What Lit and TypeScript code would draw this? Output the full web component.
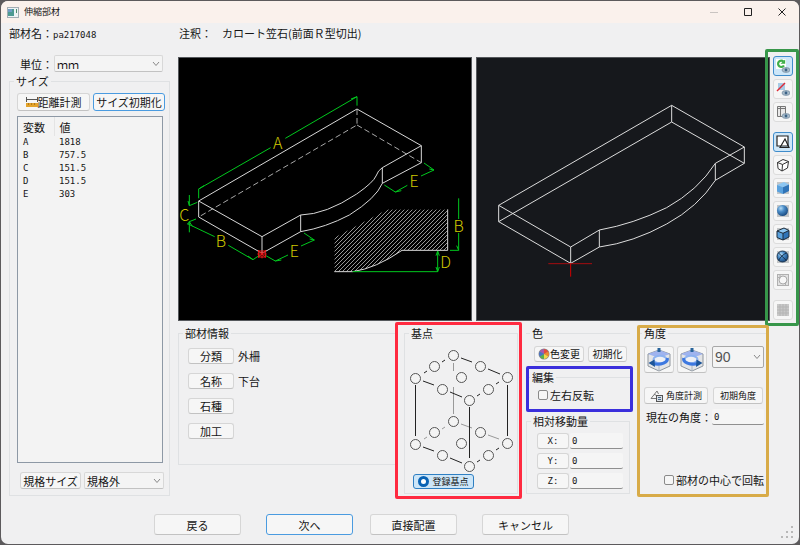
import { LitElement, html, css, svg } from "lit";
import { customElement, state } from "lit/decorators.js";
import { classMap } from "lit/directives/class-map.js";

const shared = css`
  * { box-sizing: border-box; }
  button, select, input { font: inherit; color: inherit; margin: 0; }
  button {
    display: inline-flex; align-items: center; justify-content: center;
    padding: 0; background: #f6f6f6; border: 1px solid #d6d6d6;
    border-bottom-color: #c2c2c2; border-radius: 3px; white-space: nowrap;
    line-height: 12px;
  }
  svg { display: block; }
`;

const eye = svg`<ellipse cx="10" cy="11" rx="4" ry="2.4" fill="#a9bccb" stroke="#7891a5" stroke-width=".8"/><circle cx="10" cy="11" r="1.4" fill="#3c6387"/>`;
const shade = svg`<rect x="1" y="1" width="12" height="12" fill="#c3c6c8"/>`;
const cubeBlue = svg`<path d="M1 4L8 1l5 2.5-6 2.8z" fill="#8cc6f2"/><path d="M1 4l6 2.3V13L1 10.5z" fill="#5aa2de"/><path d="M7 6.3l6-2.8V10l-6 3z" fill="#2f74b8"/>`;
const ball = svg`${shade}<circle cx="6.5" cy="6.5" r="5.5" fill="url(#ballfill)"/>`;
const defs = svg`<defs><radialGradient id="ballfill" cx=".35" cy=".3" r=".7"><stop offset="0" stop-color="#b5dcf6"/><stop offset=".45" stop-color="#4a8cc7"/><stop offset="1" stop-color="#1d4f86"/></radialGradient></defs>`;

const tools = [
  { name: "更新", on: true, gap: false, art: svg`<rect x="0" y="0" width="10" height="10" fill="#fff"/><path d="M7.5 2.5A3.2 3.2 0 1 0 8 6.5" fill="none" stroke="#3fae49" stroke-width="2.2"/><path d="M4.5 4.8h4.700V.4z" fill="#3fae49"/>${eye}` },
  { name: "非表示", on: false, gap: false, art: svg`<rect x="2" y="1" width="7" height="7" fill="#a8cbe6"/>${eye}<path d="M1 9L9 1" stroke="#e02a36" stroke-width="1.5"/>` },
  { name: "図面", on: false, gap: false, art: svg`<path d="M1.5 1.5h8v10h-8zM4.500 1.500v10M1.500 3.500h8" fill="#e9e9e9" stroke="#777" stroke-width="1"/>${eye}` },
  { name: "ワイヤー", on: true, gap: true, art: svg`<path d="M1 1h11v10H1z" fill="#fff" stroke="#222" stroke-width="1.2"/><path d="M4 12.5L9 4l4 8.500z" fill="none" stroke="#222" stroke-width="1.200"/>` },
  { name: "隠線", on: false, gap: false, art: svg`<path d="M1.500 4.500L7 1.500l5.500 2-1 6.500L6 13l-4-2.500zM1.500 4.500L6.500 6.500l6-3M6.500 6.500L6 13" fill="#fff" stroke="#333" stroke-width="1"/>` },
  { name: "面", on: false, gap: false, art: svg`${shade}${cubeBlue}` },
  { name: "滑らか", on: false, gap: false, art: ball },
  { name: "面と線", on: false, gap: false, art: svg`${shade}${cubeBlue}<path d="M1 4L8 1l5 2.500V10l-6 3-6-2.500zM1 4l6 2.300 6-2.800M7 6.300V13" fill="none" stroke="#1d2b3a" stroke-width="1"/>` },
  { name: "滑らかと線", on: false, gap: false, art: svg`${ball}<path d="M2.500 3l8 7.500M10.500 3c-3 1-6 4-8 7.500" fill="none" stroke="#172d45" stroke-width=".9"/><circle cx="6.500" cy="6.500" r="5.500" fill="none" stroke="#172d45" stroke-width=".9"/>` },
  { name: "透過", on: false, gap: false, art: svg`<rect x="1.500" y="1.500" width="11" height="11" fill="#e2e2e2" stroke="#b0b0b0"/><circle cx="7" cy="7" r="4" fill="#f7f7f7" stroke="#aaa"/><path d="M1.500 4.500h3M4 1.500v4M9.500 12.500V9" stroke="#b0b0b0"/>` },
  { name: "グリッド", on: false, gap: true, art: svg`<rect x="1" y="1" width="12" height="12" fill="#c8c8c8"/><path d="M4 1v12M7 1v12M10 1v12M1 4h12M1 7h12M1 10h12" stroke="#b4b4b4" stroke-width="1"/>` },
];

const hatch = Array.from({ length: 48 }, (_, i) => {
  const x = 470 + i * 12;
  return `M${x} 463L${x - 190} 653`;
}).join("");

/* Dimensioned sketch of the part, with its side profile. */
@customElement("part-sketch")
class PartSketch extends LitElement {
  static styles = css`
    :host { display: block; background: #000; border: 1px solid #55585c; }
    svg { display: block; width: 100%; height: auto; }
    .w { fill: none; stroke: #d8d8d8; stroke-width: 3; }
    .d { fill: none; stroke: #a8a8a8; stroke-width: 3; stroke-dasharray: 17 9; }
    .g { fill: none; stroke: #00c81e; stroke-width: 3; }
    .h { fill: none; stroke: #989898; stroke-width: 3; }
    .r { fill: none; stroke: #f01818; stroke-width: 3; }
    text { fill: #cfc800; font: 300 48px "Noto Sans CJK JP", sans-serif; text-anchor: middle; }
  `;
  render() {
    return html`<svg viewBox="9 9 876 786" role="img" aria-label="寸法図">
      <defs><clipPath id="side"><path d="M475 548L635 463H815V586H678Q600 640 530 650H475z"/></clipPath></defs>
      <path class="d" d="M543 163V210L68 486M543 210L736 323"/>
      <path class="w" d="M68 438L543 162L736 272V323L619 385V338L736 272M68 438V486L258 595L374 530V480L258 545L68 438M258 545V595"/>
      <path class="w" d="M374 480Q450 478 542 417Q592 382 600 363Q606 346 619 338M374 530Q450 517 520 480Q600 430 619 385"/>
      <path class="g" d="M68 430V402L284 278M328 250L543 125V152M68 402L84 392M543 125L525 132"/>
      <path class="g" d="M40 420V452L64 442M40 452l-4-14M40 532V500L60 492M34 506L116 545M40 500l-5 8M40 500l9 14M157 571L231 614L252 600M231 614L216 603"/>
      <path class="g" d="M268 601L298 618L336 600M298 618l18-3M375 573L415 555L384 534M415 555l-14-3M625 390L658 411L694 391M658 411l18-4M735 363L774 345L744 324M774 345l-14-3"/>
      <g clip-path="url(#side)"><path class="h" d=${hatch}/></g>
      <path class="w" d="M815 463V586H678Q600 640 530 650H475"/>
      <path class="g" d="M530 650H785V588M785 588l-5 14M785 588l5 14M785 650l-5-14M785 650l5-14M848 430V492M848 534V586H822M848 586l-6-14"/>
      <path class="r" d="M246 585L270 608M270 585L246 608M244 597H272M258 590V610M248 588H268V606H248z"/>
      <text x="305" y="283">A</text><text x="25" y="498">C</text><text x="135" y="576">B</text>
      <text x="355" y="606">E</text><text x="714" y="396">E</text><text x="848" y="532">B</text><text x="809" y="639">D</text>
    </svg>`;
  }
}

/* Wireframe of the part in its current orientation. */
@customElement("part-model")
class PartModel extends LitElement {
  static styles = css`
    :host { display: block; background: #16181c; border: 1px solid #55585c; }
    svg { display: block; width: 100%; height: auto; }
    .w { fill: none; stroke: #dcdcdc; stroke-width: 3; }
    .r { stroke: #d40000; stroke-width: 3; }
    .q { stroke: #a50d10; stroke-width: 3; }
  `;
  render() {
    return html`<svg viewBox="21 9 876 786" role="img" aria-label="立体図">
      <path class="w" d="M86 451L605 151L823 276V325L736 376V325L823 276M86 451V500L302 625L388 576V525L302 576L86 451M302 576V625M605 151V201L86 500M605 201L823 325"/>
      <path class="w" d="M388 525Q490 507 590 458Q685 405 736 325M388 576Q490 562 590 507Q685 455 736 376"/>
      <path class="q" d="M235 626H366"/><path class="r" d="M302 626V665"/>
    </svg>`;
  }
}

const points: [number, number][] = [
  [44, 6], [25, 17], [71, 17], [6, 29], [52, 28], [98, 28], [33, 40], [79, 40], [60, 51],
];

/* Box of base points, each one selectable. */
@customElement("base-points")
class BasePoints extends LitElement {
  static styles = css`
    :host { display: block; position: relative; width: 104px; height: 123px; }
    svg { display: block; }
    .front { stroke: #222; }
    .back { stroke: #999; }
    input {
      appearance: none; position: absolute; box-sizing: border-box; width: 11px; height: 11px;
      margin: -5px 0 0 -5px; border: 1px solid #555; border-radius: 50%; background: #f4f4f4;
    }
    input:checked { border: 3px solid #0a63b4; }
  `;
  render() {
    const all = [...points, ...points.map(([x, y]) => [x, y + 66])];
    return html`
      <svg width="104" height="123" viewBox="0 0 104 123" fill="none" aria-hidden="true">
        <path class="back" d="M44.500 14V22M44.500 38V65M52 75L63 79M79 86L90 90M15 90L18 88M33 80L36 78"/>
        <path class="front" d="M6.500 36V87M98.500 36V87M60.500 58V109M52 9L63 13M79 20L91 25M15 24L18 22M33 13L36 11M14 32L25 36M41 43L53 48M68 47L71 45M87 35L90 33M14 98L25 102M41 109L53 114M68 113L71 111M87 101L90 99"/>
      </svg>
      ${all.map(([x, y], i) => html`<input type="radio" name="base" aria-label="基点 ${i + 1}" style="left:${x}px;top:${y}px">`)}`;
  }
}

@customElement("app-root")
class AppRoot extends LitElement {
  @state() private size = [["A", "1818"], ["B", "757.5"], ["C", "151.5"], ["D", "151.5"], ["E", "303"]];

  static styles = [shared, css`
    :host {
      display: block; background: #5c5a5c; padding: 1px; color: #151515;
      font: 11px/12px "Noto Sans CJK JP", sans-serif;
    }
    .window {
      display: flex; flex-direction: column; min-height: calc(100vh - 3px);
      background: #f0f0f1; border-radius: 7px; overflow: hidden;
    }
    .num { font: 9px/12px "DejaVu Sans Mono", monospace; }
    header { display: flex; align-items: center; height: 22px; padding: 0 9px 0 6px; gap: 5px; background: #faf1ec; }
    h1 { margin: 0; font: inherit; font-size: 9px; flex: 1; }
    .controls { display: flex; gap: 18px; }
    .controls button { width: 16px; height: 16px; border: 0; background: none; }
    .facts { display: flex; height: 32px; padding: 4px 8px; }
    .facts > span:first-child { width: 170px; }
    .note { margin-left: 10px; }
    main { display: flex; gap: 8px; padding: 0 6px 0 8px; }
    .side { width: 161px; display: flex; flex-direction: column; }
    .unit { display: flex; align-items: center; justify-content: flex-end; gap: 1px; height: 17px; padding-right: 7px; }
    .combo { position: relative; display: block; }
    .combo select {
      appearance: none; display: block; width: 100%; height: 17px; padding: 0 2px; line-height: 14px;
      background: #f4f4f4; border: 1px solid #d8d8d8; border-bottom-color: #c2c2c2; border-radius: 2px;
    }
    .combo svg { position: absolute; right: 3px; top: 50%; margin-top: -3px; pointer-events: none; }
    .unit .combo { width: 109px; }
    fieldset { position: relative; min-width: 0; margin: 0; padding: 0; border: 1px solid #dfe1e3; }
    legend { margin-left: 4px; padding: 0 2px; height: 12px; line-height: 12px; }
    .size { flex: 1; margin-top: 3px; }
    .stack { display: flex; flex-direction: column; height: 100%; padding: 6px 5px 6px 7px; }
    .row { display: flex; align-items: center; }
    .measure { width: 73px; height: 18px; }
    .reset { width: 72px; height: 18px; }
    .blue { border-color: #4a9be0; }
    .pair { gap: 3px; margin-right: -2px; }
    .list { flex: 1; margin: 5px 1px 9px 0; background: #f3f3f3; border: 1px solid #8d98a5; }
    table { border-collapse: collapse; width: 100%; }
    th, td { padding: 0 0 0 5px; height: 13px; text-align: left; font-weight: 400; }
    th { height: 19px; }
    th:first-child { width: 36px; border-right: 1px solid #e4e4e4; }
    td { font: 9px/13px "DejaVu Sans Mono", monospace; }
    .standard { gap: 3px; padding-left: 3px; }
    .standard button { width: 61px; height: 17px; }
    .standard .combo { flex: 1; }
    .work { flex: 1; min-width: 0; padding-bottom: 2px; }
    .views { display: flex; align-items: flex-start; gap: 4px; padding-top: 1px; }
    part-sketch, part-model { flex: 1; min-width: 0; margin-top: 1px; }
    .tools { position: relative; display: flex; flex-direction: column; gap: 3px; width: 20px; margin-left: -1px; }
    .tools button { width: 20px; height: 20px; border-color: #dcdcdc; }
    .tools .on { background: #cde6f8; border: 1px solid #3f8ccb; }
    .tools .gap { margin-top: 7px; }
    .frame::after { content: ""; position: absolute; border: 3px solid; border-radius: 2px; pointer-events: none; }
    .green::after { color: #37964a; inset: -7px -6px -6px -8px; }
    .red::after { color: #ff2a40; inset: -17px -5px -6px -10px; }
    .indigo::after { color: #3b2fdc; inset: -17px -3px -11px 0; }
    .gold::after { color: #d8ab48; inset: -14px -1px -4px -1px; }
    .groups {
      display: grid; grid-template-columns: minmax(0, 1fr) 114px 104px 130px; gap: 8px;
      padding-right: 25px; margin-top: 6px; align-items: start;
    }
    .info { height: 138px; }
    .info dl { display: grid; grid-template-columns: 46px 1fr; gap: 9px 4px; margin: 9px 0 0 9px; }
    .info dt, .info dd { display: flex; margin: 0; height: 16px; align-items: center; }
    .info button { width: 46px; height: 16px; }
    .base { height: 167px; }
    .base base-points { margin: 10px 0 0 4px; }
    .chip { width: 61px; height: 15px; margin: 2px 0 0 8px; gap: 3px; font-size: 9px; background: #cde6f8; border-color: #2f7fc2; }
    .column { display: flex; flex-direction: column; }
    .colour { height: 40px; border-width: 1px 0 0; }
    .colour .row { gap: 4px; padding: 7px 3px 0 8px; }
    .colour button { height: 16px; font-size: 10px; }
    .change { width: 50px; }
    .init { flex: 1; }
    .edit { height: 37px; margin-top: 4px; border-width: 1px 0 0; }
    .check { display: flex; align-items: center; gap: 2px; }
    .check input { appearance: none; width: 10px; height: 10px; border: 1px solid #8a8a8a; border-radius: 2px; background: #f6f6f6; }
    .edit .check { padding: 6px 0 0 12px; }
    .move { height: 79px; margin-top: 7px; }
    .move .row { gap: 1px; margin: 4px 6px 0 10px; }
    .move .rows { padding-top: 2px; }
    .move button { width: 32px; height: 16px; }
    .field { border: 0; border-bottom: 1px solid #8f8f8f; border-radius: 2px; background: #f5f5f5; height: 16px; min-width: 0; flex: 1; padding: 0 2px; }
    .move .field { width: 20px; }
    .angle { height: 166px; border-width: 1px 0 0; }
    .turn { gap: 3px; padding: 7px 4px 0 6px; align-items: flex-start; }
    .turn button { width: 30px; height: 27px; }
    .turn .combo { flex: 1; margin-left: 2px; }
    .turn select { height: 22px; font: 14px/20px "Liberation Sans", sans-serif; border-color: #a8a8a8; color: #555; }
    .calc { gap: 5px; padding: 14px 5px 0 6px; }
    .calc button { height: 17px; font-size: 9px; gap: 3px; }
    .calc button:first-child { width: 64px; }
    .calc button:last-child { flex: 1; }
    .now { padding: 5px 4px 0 8px; }
    .now label { width: 66px; white-space: nowrap; }
    .now .field { width: 20px; }
    .centre { justify-content: flex-end; padding: 49px 4px 0 0; white-space: nowrap; }
    footer { display: flex; align-items: flex-start; padding: 18px 6px 0 153px; gap: 25px; flex: 1; position: relative; }
    footer button { width: 87px; height: 21px; }
    footer .direct { margin-left: -8px; }
    .grip { position: absolute; right: 6px; bottom: 6px; }
  `];

  private arrow() {
    return html`<svg width="8" height="6" viewBox="0 0 8 6" fill="none" stroke="#888" aria-hidden="true"><path d="M1 1l3 3.500L7 1"/></svg>`;
  }

  private cube(flip: boolean) {
    return html`<svg width="24" height="25" viewBox="0 0 24 25" aria-hidden="true">
      <path d="M1 7L12 3l11 4v12l-11 5-11-5z" fill="#e4e5e7" stroke="#8f969e"/>
      <path d="M12 11v13" stroke="#adb6c0" fill="none"/>
      <path d="M1 7L12 3l11 4-11 4z" fill="#9fb3ee"/>
      <path d="M10.500 1h3v4h-3z" fill="#27639b"/>
      <g transform=${flip ? "translate(24 0) scale(-1 1)" : ""}>
        <ellipse cx="13" cy="12.500" rx="6.500" ry="3.800" fill="#eef0f5" stroke="#8db2f0" stroke-width="2"/>
        <path d="M20.300 11c1 4.500-6 7.300-14 5.800" fill="none" stroke="#3d78e0" stroke-width="3"/>
        <path d="M1.500 16l6-3.500.5 7.500z" fill="#1d5599"/>
      </g></svg>`;
  }

  render() {
    return html`
    <div class="window">
      <header>
        <svg width="12" height="11" viewBox="0 0 12 11" aria-hidden="true"><rect x=".5" y=".5" width="11" height="10" fill="#eef3f5" stroke="#a3adb3"/><rect x="1" y="2" width="6" height="7" fill="#4d9a92"/><path d="M1 2h4v3H1z" fill="#6f9cc4"/><rect x="9" y="2" width="1" height="4" fill="#4f8d6c"/></svg>
        <h1>伸縮部材</h1>
        <div class="controls">
          <button aria-label="最小化"><svg width="8" height="8" stroke="#c9c4c1"><path d="M0 4.500h8"/></svg></button>
          <button aria-label="最大化"><svg width="8" height="8" fill="none" stroke="#222"><path d="M.5.500h7v7h-7z"/></svg></button>
          <button aria-label="閉じる"><svg width="8" height="8" stroke="#222"><path d="M.5.500l7 7M7.500.500l-7 7"/></svg></button>
        </div>
      </header>
      <div class="facts"><span>部材名：<span class="num">pa217048</span></span><span>注釈：</span><span class="note">カロート笠石(前面Ｒ型切出)</span></div>
      <main>
        <section class="side">
          <div class="unit"><label for="unit">単位：</label><span class="combo"><select id="unit"><option>ｍｍ</option></select>${this.arrow()}</span></div>
          <fieldset class="size"><legend>サイズ</legend>
            <div class="stack">
              <div class="row pair">
                <button class="measure"><svg width="12" height="11" viewBox="0 0 12 11" aria-hidden="true"><path d="M.5 0v5M11.500 0v5M1 2.500h10" stroke="#555" fill="none"/><rect x="0" y="6" width="12" height="4" fill="#e3a32b"/><path d="M2.500 6v2M5.500 6v2M8.500 6v2" stroke="#b07a1c"/></svg>距離計測</button>
                <button class="reset blue">サイズ初期化</button>
              </div>
              <div class="list"><table>
                <thead><tr><th>変数</th><th>値</th></tr></thead>
                <tbody>${this.size.map(([k, v]) => html`<tr><td>${k}</td><td>${v}</td></tr>`)}</tbody>
              </table></div>
              <div class="row standard"><button>規格サイズ</button><span class="combo"><select aria-label="規格サイズ"><option>規格外</option></select>${this.arrow()}</span></div>
            </div>
          </fieldset>
        </section>
        <section class="work">
          <div class="views">
            <part-sketch></part-sketch><part-model></part-model>
            <div class="tools frame green">
              ${tools.map(t => html`<button aria-label=${t.name} class=${classMap({ on: t.on, gap: t.gap })}><svg width="14" height="14" viewBox="0 0 14 14" aria-hidden="true">${defs}${t.art}</svg></button>`)}
            </div>
          </div>
          <div class="groups">
            <fieldset class="info"><legend>部材情報</legend>
              <dl>${[["分類", "外柵"], ["名称", "下台"], ["石種", ""], ["加工", ""]].map(([k, v]) => html`<dt><button>${k}</button></dt><dd>${v}</dd>`)}</dl>
            </fieldset>
            <fieldset class="base frame red"><legend>基点</legend>
              <base-points></base-points>
              <button class="chip" aria-pressed="true"><svg width="11" height="11" aria-hidden="true"><circle cx="5.500" cy="5.500" r="4" fill="#fff" stroke="#0a63b4" stroke-width="3"/></svg>登録基点</button>
            </fieldset>
            <div class="column">
              <fieldset class="colour"><legend>色</legend>
                <div class="row"><button class="change"><svg width="12" height="12" viewBox="-6 -6 12 12" aria-hidden="true"><circle r="5.500" fill="#888"/><path d="M0 0L-4.300-2.500A5 5 0 0 1 0-5z" fill="#a65ab0"/><path d="M0 0V-5A5 5 0 0 1 4.300-2.500z" fill="#e34c3c"/><path d="M0 0L4.300-2.500A5 5 0 0 1 4.300 2.500z" fill="#f08a2c"/><path d="M0 0L4.300 2.500A5 5 0 0 1 0 5z" fill="#f2d94a"/><path d="M0 0V5A5 5 0 0 1-4.300 2.500z" fill="#55b050"/><path d="M0 0L-4.300 2.500A5 5 0 0 1-4.300-2.500z" fill="#4774c9"/></svg>色変更</button><button class="init">初期化</button></div>
              </fieldset>
              <fieldset class="edit frame indigo"><legend>編集</legend>
                <label class="check"><input type="checkbox">左右反転</label>
              </fieldset>
              <fieldset class="move"><legend>相対移動量</legend>
                <div class="rows">${["X", "Y", "Z"].map(a => html`<div class="row"><button class="num">${a}:</button><input class="field num" aria-label=${a} value="0"></div>`)}</div>
              </fieldset>
            </div>
            <fieldset class="angle frame gold"><legend>角度</legend>
              <div class="row turn"><button aria-label="左回転">${this.cube(false)}</button><button aria-label="右回転">${this.cube(true)}</button><span class="combo"><select aria-label="回転角度"><option>90</option></select>${this.arrow()}</span></div>
              <div class="row calc"><button><svg width="13" height="12" viewBox="0 0 13 12" fill="none" aria-hidden="true"><path d="M7 1L1 8.500h5M4 4.500c2 0 3 1.500 3 3M7 1l1.500 3" stroke="#777"/><rect x="6.500" y="5.500" width="6" height="6" fill="#d9dfe5" stroke="#555"/><path d="M8 7.500h3M8 9.500h3" stroke="#4a6987"/></svg>角度計測</button><button>初期角度</button></div>
              <div class="row now"><label for="now">現在の角度：</label><input id="now" class="field num" value="0"></div>
              <label class="check centre"><input type="checkbox">部材の中心で回転</label>
            </fieldset>
          </div>
        </section>
      </main>
      <footer>
        <button>戻る</button><button class="blue">次へ</button><button class="direct">直接配置</button><button>キャンセル</button>
        <svg class="grip" width="12" height="12" fill="#b8b8b8" aria-hidden="true"><path d="M10 0h2v2h-2zM5 5h2v2H5zM10 5h2v2h-2zM0 10h2v2H0zM5 10h2v2H5zM10 10h2v2h-2z"/></svg>
      </footer>
    </div>`;
  }
}
